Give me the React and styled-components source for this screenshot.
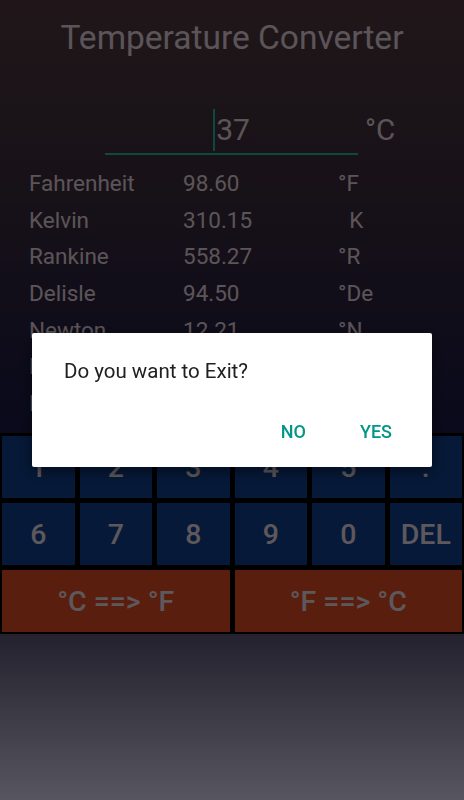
import React from "react";
import styled, { createGlobalStyle } from "styled-components";

const Global = createGlobalStyle`
  html, body { margin: 0; padding: 0; }
  body { font-family: Roboto, "Noto Sans", sans-serif; }
  #root { min-height: 100vh; }
`;

const Screen = styled.div`
  min-height: 800px;
  display: flex;
  flex-direction: column;
  background: linear-gradient(
    to bottom,
    #50393f 0%,
    #3a2b3c 25%,
    #191946 54%,
    #1a1a48 60%,
    #5d5876 80%,
    #dad5ee 100%
  );
`;

const Title = styled.h1`
  margin: 21px 0 0;
  font-size: 33.5px;
  line-height: 33px;
  font-weight: 400;
  text-align: center;
  color: #e4d3dc;
`;

const InputRow = styled.div`
  display: flex;
  align-items: flex-end;
  padding-left: 105px;
  margin-top: 53px;
`;

const InputField = styled.div`
  width: 253px;
  height: 48px;
  border-bottom: 2px solid #1eb99e;
  display: flex;
  justify-content: center;
  align-items: flex-end;
  box-sizing: border-box;
`;

const InputText = styled.span`
  font-size: 30px;
  line-height: 38px;
  color: #e4d3dc;
  margin-bottom: 2px;
  display: flex;
  align-items: center;
`;

const Cursor = styled.span`
  display: inline-block;
  width: 2px;
  height: 42px;
  background: #1eb99e;
  margin-right: 1px;
`;

const UnitLabel = styled.span`
  font-size: 29.5px;
  line-height: 38px;
  color: #e4d3dc;
  margin-left: 7px;
  margin-bottom: 6px;
`;

const Table = styled.div`
  display: flex;
  flex-direction: column;
  padding-left: 29px;
  margin-top: 10px;
`;

const Row = styled.div`
  display: grid;
  grid-template-columns: 154px 155px 1fr;
  height: 36.6px;
  align-items: center;
  font-size: 22.5px;
  color: #e4d3dc;
  white-space: pre;
`;

const Keypad = styled.div`
  margin-top: 12px;
  background: #000;
  padding: 3px 2px 2px;
  display: grid;
  grid-template-columns: repeat(6, 1fr);
  grid-auto-rows: 62px;
  column-gap: 5px;
  row-gap: 5px;
`;

const Key = styled.button`
  border: none;
  margin: 0;
  padding: 0;
  background: ${(p) => (p.$convert ? "#e14b23" : "#0f3f8c")};
  grid-column: ${(p) => (p.$convert ? "span 3" : "span 1")};
  color: #e8dce6;
  font-family: Roboto, "Noto Sans", sans-serif;
  font-size: 28.5px;
  font-weight: 500;
  line-height: 1;
  padding-top: 3px;
`;

const Scrim = styled.div`
  position: fixed;
  inset: 0;
  background: rgba(0, 0, 0, 0.6);
  display: flex;
  align-items: center;
  justify-content: center;
`;

const Dialog = styled.div`
  width: 400px;
  height: 134px;
  box-sizing: border-box;
  background: #fff;
  border-radius: 2px;
  box-shadow: 0 4px 14px rgba(0, 0, 0, 0.5);
  display: flex;
  flex-direction: column;
  padding: 24px 24px 0 32px;
`;

const Message = styled.p`
  margin: 0;
  font-size: 20.5px;
  line-height: 28px;
  color: #202020;
`;

const Actions = styled.div`
  display: flex;
  justify-content: flex-end;
  gap: 54px;
  margin-top: 37px;
  padding-right: 16px;
`;

const Action = styled.button`
  border: none;
  background: none;
  padding: 0;
  font-family: Roboto, "Noto Sans", sans-serif;
  font-size: 18px;
  font-weight: 500;
  color: #009688;
  line-height: 20px;
`;

const results = [
  ["Fahrenheit", "98.60", "°F"],
  ["Kelvin", "310.15", "  K"],
  ["Rankine", "558.27", "°R"],
  ["Delisle", "94.50", "°De"],
  ["Newton", "12.21", "°N"],
  ["Réaumur", "29.60", "°Ré"],
  ["Rømer", "26.93", "°Rø"],
];

const keys = ["1", "2", "3", "4", "5", ".", "6", "7", "8", "9", "0", "DEL"];

export default function App() {
  return (
    <>
      <Global />
      <Screen>
        <Title>Temperature Converter</Title>
        <InputRow>
          <InputField>
            <InputText>
              <Cursor />
              37
            </InputText>
          </InputField>
          <UnitLabel>°C</UnitLabel>
        </InputRow>
        <Table>
          {results.map(([name, value, unit]) => (
            <Row key={name}>
              <span>{name}</span>
              <span>{value}</span>
              <span>{unit}</span>
            </Row>
          ))}
        </Table>
        <Keypad>
          {keys.map((k) => (
            <Key key={k}>{k}</Key>
          ))}
          <Key $convert>°C ==&gt; °F</Key>
          <Key $convert>°F ==&gt; °C</Key>
        </Keypad>
      </Screen>
      <Scrim>
        <Dialog>
          <Message>Do you want to Exit?</Message>
          <Actions>
            <Action>NO</Action>
            <Action>YES</Action>
          </Actions>
        </Dialog>
      </Scrim>
    </>
  );
}
